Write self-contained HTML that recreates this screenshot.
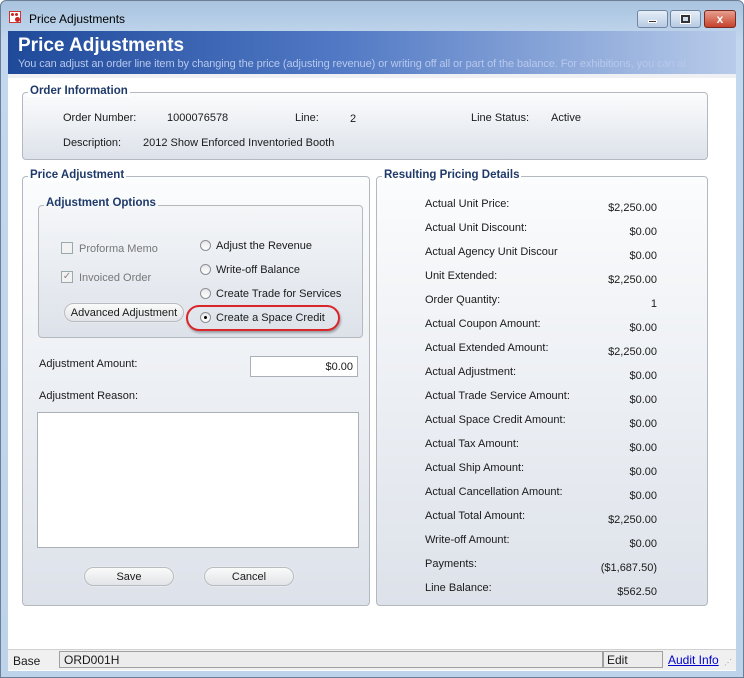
<!DOCTYPE html>
<html><head><style>
*{margin:0;padding:0;box-sizing:border-box}
body{width:744px;height:678px;overflow:hidden;background:#fff;font-family:"Liberation Sans",Arial,sans-serif;font-size:11px;color:#1a1a1a;position:relative}
.a{position:absolute;white-space:nowrap}
.t{margin-top:1px}
.grp{position:absolute;border:1px solid #b4b9c0;border-radius:4px;background:linear-gradient(#fbfcfd,#dde2ea)}
.lg{position:absolute;font-weight:bold;color:#1f3a6a;font-size:11.5px;background:transparent;padding:0 2px}
.btn{position:absolute;border:1px solid #b8bcc2;border-radius:10px;background:linear-gradient(#fafafa,#e2e4e7);text-align:center;font-size:11px;line-height:18px;box-shadow:0 0 0 1px #e8eaed}
.rad{position:absolute;width:11px;height:11px;border:1px solid #8a8f96;border-radius:50%;background:linear-gradient(#e8e8e8,#fff)}
.r{position:absolute;right:87px;white-space:nowrap;margin-top:1px}
</style></head><body>
<div class="a" style="left:0;top:0;width:744px;height:678px;background:linear-gradient(#a9c3df,#c3d8ee 40px,#bcd3ea);border:1px solid #6b7f96;border-radius:6px 6px 0 0"></div>
<div class="a" style="left:9px;top:11px;width:12px;height:12px;background:#fff;border:1px solid #c33"><div style="position:absolute;left:1px;top:1px;width:3px;height:3px;background:#c22;border-radius:50%"></div><div style="position:absolute;left:5px;top:1px;width:3px;height:3px;background:#c22;border-radius:50%"></div><div style="position:absolute;left:5px;top:5px;width:5px;height:5px;background:#c22;border-radius:50%"></div></div>
<div class="a" style="left:29px;top:12px;font-size:12px;color:#000">Price Adjustments</div>
<div class="a" style="left:637px;top:10px;width:31px;height:18px;border:1px solid #6f86a3;border-radius:3px;background:linear-gradient(#e6eef8,#b8cbe3)"><div style="position:absolute;left:10px;top:9px;width:9px;height:3px;background:#333;border:1px solid #fff"></div></div>
<div class="a" style="left:670px;top:10px;width:31px;height:18px;border:1px solid #6f86a3;border-radius:3px;background:linear-gradient(#e6eef8,#b8cbe3)"><div style="position:absolute;left:10px;top:4px;width:9px;height:8px;border:2px solid #333;outline:1px solid #fff"></div></div>
<div class="a" style="left:704px;top:10px;width:32px;height:18px;border:1px solid #7a2a22;border-radius:3px;background:linear-gradient(#e7a08f,#c6412c);color:#fff;font-weight:bold;text-align:center;font-size:12px;line-height:16px">x</div>
<div class="a" style="left:8px;top:31px;width:728px;height:640px;background:#fff"></div>
<div class="a" style="left:8px;top:31px;width:728px;height:43px;background:linear-gradient(90deg,#1f4a9a,#5078c4 45%,#b8cbe9)"></div>
<div class="a" style="left:18px;top:35px;font-size:19px;font-weight:bold;color:#fff">Price Adjustments</div>
<div class="a" style="left:18px;top:58px;font-size:11px;color:#b8c8ec;letter-spacing:-0.1px">You can adjust an order line item by changing the price (adjusting revenue) or writing off all or part of the balance. For exhibitions, you can al</div>
<div class="a" style="left:8px;top:74px;width:728px;height:4px;background:#eef0f3"></div>
<div class="grp" style="left:22px;top:92px;width:686px;height:68px"></div>
<div class="lg" style="left:28px;top:85px;background:#fff">Order Information</div>
<div class="a t" style="left:63px;top:111px">Order Number:</div>
<div class="a t" style="left:167px;top:111px">1000076578</div>
<div class="a t" style="left:295px;top:111px">Line:</div>
<div class="a t" style="left:350px;top:112px">2</div>
<div class="a t" style="left:471px;top:111px">Line Status:</div>
<div class="a t" style="left:551px;top:111px">Active</div>
<div class="a t" style="left:63px;top:136px">Description:</div>
<div class="a t" style="left:143px;top:136px">2012 Show Enforced Inventoried Booth</div>
<div class="grp" style="left:22px;top:176px;width:348px;height:430px"></div>
<div class="lg" style="left:28px;top:169px;background:#fff">Price Adjustment</div>
<div class="grp" style="left:38px;top:205px;width:325px;height:133px;background:linear-gradient(#f4f6f8,#dde2ea)"></div>
<div class="lg" style="left:44px;top:197px;background:linear-gradient(transparent 50%,#f4f6f8 50%)">Adjustment Options</div>
<div class="a" style="left:61px;top:242px;width:12px;height:12px;border:1px solid #9aa;background:#f2f2f2"></div>
<div class="a t" style="left:79px;top:242px;color:#777">Proforma Memo</div>
<div class="a" style="left:61px;top:271px;width:12px;height:12px;border:1px solid #9aa;background:#f2f2f2;color:#888;font-size:10px;line-height:10px;text-align:center">✓</div>
<div class="a t" style="left:79px;top:271px;color:#777">Invoiced Order</div>
<div class="btn" style="left:64px;top:303px;width:120px;height:19px;line-height:18px">Advanced Adjustment</div>
<div class="rad" style="left:200px;top:240px"></div><div class="a t" style="left:216px;top:239px">Adjust the Revenue</div>
<div class="rad" style="left:200px;top:264px"></div><div class="a t" style="left:216px;top:263px">Write-off Balance</div>
<div class="rad" style="left:200px;top:288px"></div><div class="a t" style="left:216px;top:287px">Create Trade for Services</div>
<div class="rad" style="left:200px;top:312px"><div style="position:absolute;left:3px;top:3px;width:3px;height:3px;background:#000;border-radius:50%"></div></div><div class="a t" style="left:216px;top:311px">Create a Space Credit</div>
<div class="a" style="left:186px;top:305px;width:154px;height:26px;border:2px solid #d8262a;border-radius:13px;box-shadow:1px 2px 2px rgba(0,0,0,.3)"></div>
<div class="a t" style="left:39px;top:357px">Adjustment Amount:</div>
<div class="a" style="left:250px;top:356px;width:108px;height:21px;background:#fff;border:1px solid #abb0b8;text-align:right;padding:4px 4px 0 0">$0.00</div>
<div class="a t" style="left:39px;top:389px">Adjustment Reason:</div>
<div class="a" style="left:37px;top:412px;width:322px;height:136px;background:#fff;border:1px solid #abb0b8"></div>
<div class="btn" style="left:84px;top:567px;width:90px;height:19px">Save</div>
<div class="btn" style="left:204px;top:567px;width:90px;height:19px">Cancel</div>
<div class="grp" style="left:376px;top:176px;width:332px;height:430px"></div>
<div class="lg" style="left:382px;top:169px;background:#fff">Resulting Pricing Details</div>
<div class="a t" style="left:425px;top:197px">Actual Unit Price:</div><div class="r" style="top:201px">$2,250.00</div>
<div class="a t" style="left:425px;top:221px">Actual Unit Discount:</div><div class="r" style="top:225px">$0.00</div>
<div class="a t" style="left:425px;top:245px">Actual Agency Unit Discour</div><div class="r" style="top:249px">$0.00</div>
<div class="a t" style="left:425px;top:269px">Unit Extended:</div><div class="r" style="top:273px">$2,250.00</div>
<div class="a t" style="left:425px;top:293px">Order Quantity:</div><div class="r" style="top:297px">1</div>
<div class="a t" style="left:425px;top:317px">Actual Coupon Amount:</div><div class="r" style="top:321px">$0.00</div>
<div class="a t" style="left:425px;top:341px">Actual Extended Amount:</div><div class="r" style="top:345px">$2,250.00</div>
<div class="a t" style="left:425px;top:365px">Actual Adjustment:</div><div class="r" style="top:369px">$0.00</div>
<div class="a t" style="left:425px;top:389px">Actual Trade Service Amount:</div><div class="r" style="top:393px">$0.00</div>
<div class="a t" style="left:425px;top:413px">Actual Space Credit Amount:</div><div class="r" style="top:417px">$0.00</div>
<div class="a t" style="left:425px;top:437px">Actual Tax Amount:</div><div class="r" style="top:441px">$0.00</div>
<div class="a t" style="left:425px;top:461px">Actual Ship Amount:</div><div class="r" style="top:465px">$0.00</div>
<div class="a t" style="left:425px;top:485px">Actual Cancellation Amount:</div><div class="r" style="top:489px">$0.00</div>
<div class="a t" style="left:425px;top:509px">Actual Total Amount:</div><div class="r" style="top:513px">$2,250.00</div>
<div class="a t" style="left:425px;top:533px">Write-off Amount:</div><div class="r" style="top:537px">$0.00</div>
<div class="a t" style="left:425px;top:557px">Payments:</div><div class="r" style="top:561px">($1,687.50)</div>
<div class="a t" style="left:425px;top:581px">Line Balance:</div><div class="r" style="top:585px">$562.50</div>
<div class="a" style="left:8px;top:649px;width:728px;height:21px;background:#f0f0f0;border-top:1px solid #d0d0d0"></div>
<div class="a" style="left:13px;top:654px;font-size:12px">Base</div>
<div class="a" style="left:59px;top:651px;width:544px;height:17px;border:1px solid #a0a0a0;background:#ececec;padding:1px 0 0 4px;font-size:12px">ORD001H</div>
<div class="a" style="left:603px;top:651px;width:60px;height:17px;border:1px solid #a0a0a0;background:#ececec;padding:1px 0 0 3px;font-size:12px">Edit</div>
<div class="a" style="left:668px;top:653px;font-size:12px;color:#0000cc;text-decoration:underline">Audit Info</div>
<div class="a" style="left:724px;top:658px;font-size:8px;color:#999;letter-spacing:-1px">⋰</div>
</body></html>
